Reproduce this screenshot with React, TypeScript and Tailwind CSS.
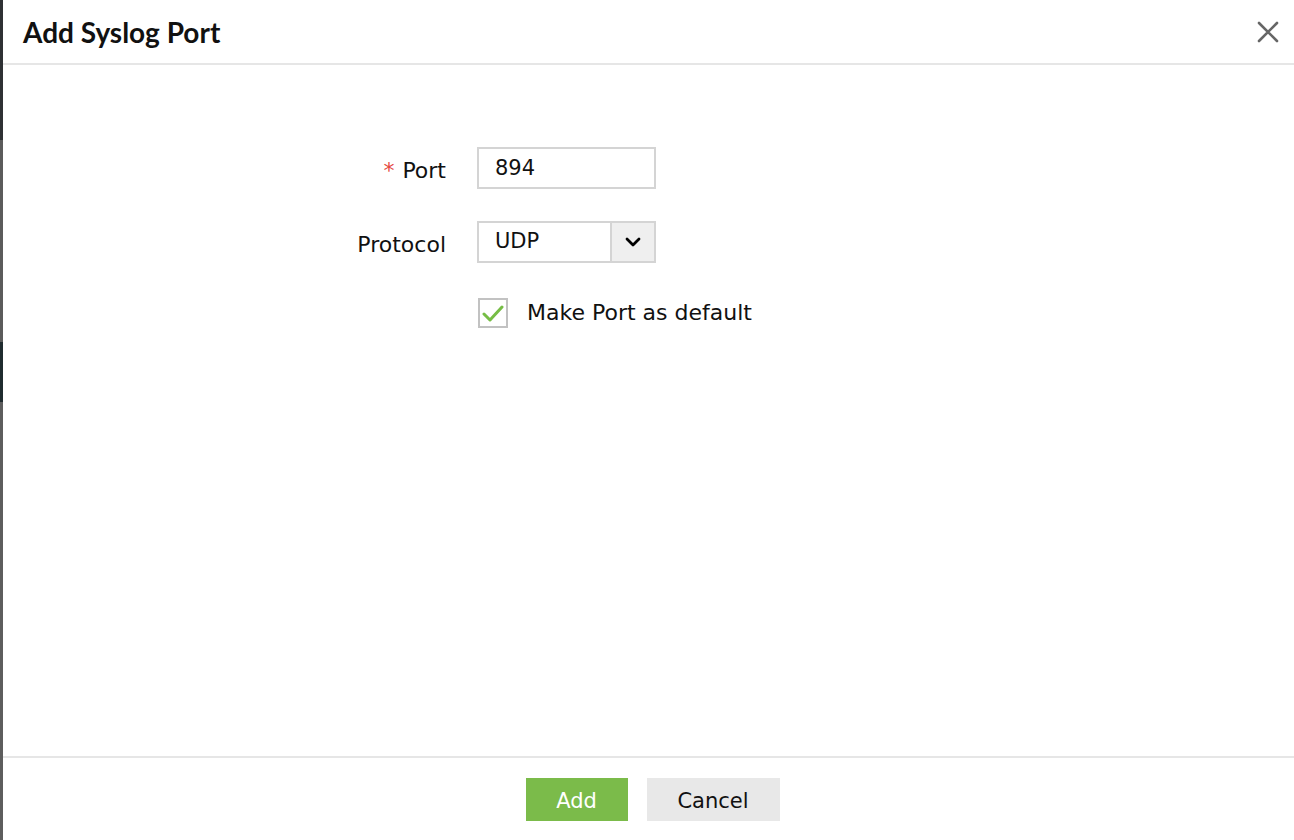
import { useState } from "react";

const body = { fontFamily: '"DejaVu Sans", Verdana, sans-serif' };

function SideStrip() {
  return (
    <div className="flex w-[3px] shrink-0 flex-col">
      <div className="h-[140px] bg-[#2e3134]" />
      <div className="h-[202px] bg-[#5b5b5b]" />
      <div className="h-[60px] bg-[#1f2b2f]" />
      <div className="flex-1 bg-[#5d5d5d]" />
    </div>
  );
}

export default function App() {
  const [port, setPort] = useState("894");
  const [isDefault, setIsDefault] = useState(true);

  return (
    <div className="flex h-[840px] w-full bg-white text-[#111]">
      <SideStrip />
      <div className="flex flex-1 flex-col">
        <div className="flex h-[65px] items-center justify-between border-b-2 border-[#e6e6e6] pl-5 pr-[10px]">
          <h2 className="text-[28px] font-bold text-[#111]" style={{ fontFamily: "Lato, sans-serif" }}>
            Add Syslog Port
          </h2>
          <button className="flex h-8 w-8 items-center justify-center text-[#666]">
            <svg width="22" height="22" viewBox="0 0 22 22" fill="none" stroke="currentColor" strokeWidth="2.6" strokeLinecap="round">
              <path d="M2 2 L20 20 M20 2 L2 20" />
            </svg>
          </button>
        </div>

        <div className="flex flex-1 flex-col pt-[82px] text-[22px]" style={body}>
          <div className="flex items-center">
            <label className="w-[443px] pt-1 text-right">
              <span className="mr-2 text-[#e5483f]">*</span>Port
            </label>
            <input
              value={port}
              onChange={(e) => setPort(e.target.value)}
              className="ml-[31px] h-[42px] w-[179px] border-2 border-[#d4d4d4] px-4 text-[21px] outline-none"
            />
          </div>

          <div className="mt-[32px] flex items-center">
            <label className="w-[443px] pt-1 text-right">Protocol</label>
            <div className="ml-[31px] flex h-[42px] w-[179px] border-2 border-[#d4d4d4] text-[21px]">
              <div className="flex flex-1 items-center px-4">UDP</div>
              <div className="flex w-[44px] items-center justify-center border-l-2 border-[#d4d4d4] bg-[#efefef]">
                <svg width="16" height="10" viewBox="0 0 16 10" fill="none" stroke="#000" strokeWidth="2.8" strokeLinecap="round" strokeLinejoin="round">
                  <path d="M2 2 L8 8 L14 2" />
                </svg>
              </div>
            </div>
          </div>

          <div className="mt-[33px] flex items-center">
            <div className="w-[443px]" />
            <button
              onClick={() => setIsDefault(!isDefault)}
              className="ml-[32px] flex h-[30px] w-[30px] items-center justify-center border-2 border-[#c2c2c2] bg-white"
            >
              {isDefault && (
                <svg width="22" height="18" viewBox="0 0 22 18" fill="none" stroke="#76bd45" strokeWidth="3" strokeLinecap="round" strokeLinejoin="round">
                  <path d="M2 10 L8 16 L20 3" />
                </svg>
              )}
            </button>
            <span className="ml-[19px]">Make Port as default</span>
          </div>
        </div>

        <div className="flex h-[84px] justify-center gap-[19px] border-t-2 border-[#e6e6e6] pl-[8px] pt-[20px] text-[21px]" style={body}>
          <button className="h-[43px] w-[102px] bg-[#7bbb4a] pt-1 text-white">Add</button>
          <button className="h-[43px] w-[133px] bg-[#e8e8e8] pt-1 text-[#111]">Cancel</button>
        </div>
      </div>
    </div>
  );
}
